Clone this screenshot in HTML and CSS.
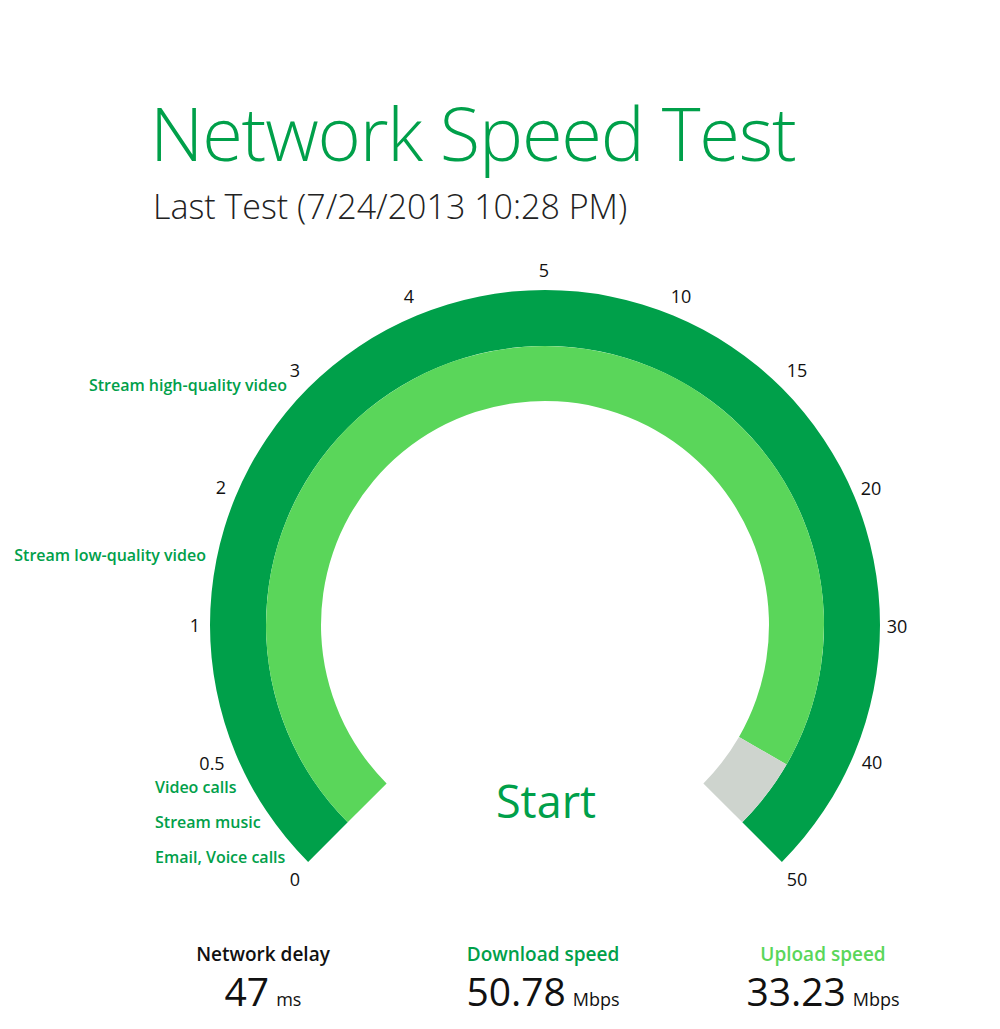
FILE: index.html
```html
<!DOCTYPE html>
<html lang="en">
<head>
<meta charset="utf-8">
<title>Network Speed Test</title>
<link rel="stylesheet" href="styles.css">
</head>
<body>
<header class="header">
  <h1 class="title">Network Speed Test</h1>
  <p class="subtitle">Last Test (7/24/2013 10:28 PM)</p>
</header>
<svg class="gauge" width="1000" height="660" viewBox="0 240 1000 660" xmlns="http://www.w3.org/2000/svg">
  <path class="ring-download" d="M 308.12 861.88 A 335 335 0 1 1 781.88 861.88 L 742.28 822.28 A 279 279 0 1 0 347.72 822.28 Z"/>
  <path class="ring-upload" d="M 347.72 822.28 A 279 279 0 1 1 786.62 764.5 L 738.99 737 A 224 224 0 1 0 386.61 783.39 Z"/>
  <path class="ring-rest" d="M 786.62 764.5 A 279 279 0 0 1 742.28 822.28 L 703.39 783.39 A 224 224 0 0 0 738.99 737 Z"/>
  <g class="ticks">
    <text x="295" y="886">0</text>
    <text x="212" y="770">0.5</text>
    <text x="195" y="632">1</text>
    <text x="221" y="494">2</text>
    <text x="295" y="377">3</text>
    <text x="409" y="303">4</text>
    <text x="544" y="277">5</text>
    <text x="681" y="303">10</text>
    <text x="797" y="377">15</text>
    <text x="871" y="495">20</text>
    <text x="897" y="633">30</text>
    <text x="872" y="769">40</text>
    <text x="797" y="886">50</text>
  </g>
  <g class="uses">
    <text class="end" x="287" y="391">Stream high-quality video</text>
    <text class="end" x="206" y="561">Stream low-quality video</text>
    <text x="155" y="793">Video calls</text>
    <text x="155" y="828">Stream music</text>
    <text x="155" y="863">Email, Voice calls</text>
  </g>
  <text class="start" x="546" y="818">Start</text>
</svg>
<section class="stats">
  <div class="stat">
    <div class="stat-label">Network delay</div>
    <div class="stat-value">47<span class="unit">ms</span></div>
  </div>
  <div class="stat">
    <div class="stat-label download">Download speed</div>
    <div class="stat-value">50.78<span class="unit">Mbps</span></div>
  </div>
  <div class="stat">
    <div class="stat-label upload">Upload speed</div>
    <div class="stat-value">33.23<span class="unit">Mbps</span></div>
  </div>
</section>
</body>
</html>
```
FILE: styles.css
```css
html, body {
  margin: 0;
  padding: 0;
  background: #ffffff;
}
body {
  font-family: "Open Sans", "Noto Sans", "Liberation Sans", sans-serif;
  color: #111111;
}
.header {
  box-sizing: border-box;
  height: 240px;
  padding: 93px 0 0 150px;
}
.title {
  margin: 0;
  font-size: 74px;
  line-height: 80px;
  font-weight: 300;
  color: #00a04a;
  letter-spacing: -1.2px;
}
.subtitle {
  margin: 13px 0 0 3px;
  font-size: 34px;
  line-height: 40px;
  font-weight: 300;
  color: #222222;
}
.gauge {
  display: block;
}
.ring-download { fill: #00a04a; }
.ring-upload { fill: #5ad65a; }
.ring-rest { fill: #ced4ce; }
.ticks text {
  font-family: "Open Sans", "Noto Sans", sans-serif;
  font-size: 18px;
  fill: #111111;
  text-anchor: middle;
}
.uses text {
  font-family: "Open Sans", "Noto Sans", sans-serif;
  font-size: 16px;
  font-weight: 600;
  fill: #00a04a;
  text-anchor: start;
}
.uses text.end {
  text-anchor: end;
}
.start {
  font-family: "Open Sans", "Noto Sans", sans-serif;
  font-size: 45px;
  fill: #00a04a;
  text-anchor: middle;
}
.stats {
  display: flex;
  justify-content: flex-start;
  padding: 42px 0 0 123px;
}
.stat {
  width: 280px;
  display: flex;
  flex-direction: column;
  align-items: center;
}
.stat-label {
  font-size: 19px;
  line-height: 24px;
  font-weight: 600;
  color: #111111;
}
.stat-label.download { color: #00a04a; }
.stat-label.upload { color: #5ad65a; }
.stat-value {
  margin-top: 3px;
  font-size: 39px;
  line-height: 44px;
  font-weight: 400;
  color: #111111;
}
.unit {
  font-size: 18px;
  margin-left: 7px;
  font-weight: 400;
}
```
